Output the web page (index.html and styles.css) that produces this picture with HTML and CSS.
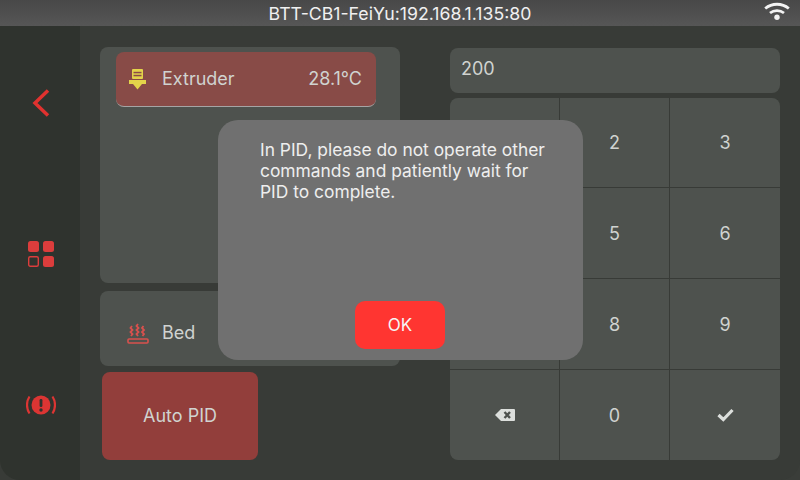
FILE: index.html
```html
<!DOCTYPE html>
<html lang="en">
<head>
  <meta charset="UTF-8">
  <title>PID Tuning</title>
  <link rel="stylesheet" href="styles.css">
</head>
<body>
  <div class="screen">
    <header class="topbar">
      <span class="host">BTT-CB1-FeiYu:192.168.1.135:80</span>
      <svg class="wifi" width="26" height="18" viewBox="0 0 26 18">
        <path d="M1.200 6.500C8 0.800 18 0.800 24.800 6.500" fill="none" stroke="#f2f2f2" stroke-width="2.800"/>
        <path d="M6 11C10 7.800 16 7.800 20 11" fill="none" stroke="#f2f2f2" stroke-width="2.800"/>
        <circle cx="13" cy="15.300" r="2.700" fill="#f2f2f2"/>
      </svg>
    </header>

    <div class="body">
      <nav class="sidebar">
        <svg width="24" height="30" viewBox="0 0 24 30">
          <path d="M19 2.500L6 15L19 27.500" fill="none" stroke="#e0322f" stroke-width="3.500"/>
        </svg>
        <svg width="26" height="26" viewBox="0 0 26 26">
          <rect x="0" y="0" width="11" height="11" rx="2.500" fill="#dc3d3c"/>
          <rect x="15" y="0" width="11" height="11" rx="2.500" fill="#dc3d3c"/>
          <rect x="0.700" y="15.700" width="9.600" height="9.600" rx="1.500" fill="none" stroke="#dc3d3c" stroke-width="1.400"/>
          <rect x="15" y="15" width="11" height="11" rx="2.500" fill="#dc3d3c"/>
        </svg>
        <svg width="30" height="20" viewBox="0 0 30 20">
          <circle cx="15" cy="10" r="9.500" fill="#dc3533"/>
          <rect x="13.600" y="4" width="2.800" height="8" rx="1.200" fill="#2f332e"/>
          <circle cx="15" cy="15" r="1.700" fill="#2f332e"/>
          <path d="M3.500 1.500C0.200 6.500 0.200 13.500 3.500 18.500M26.500 1.500C29.800 6.500 29.800 13.500 26.500 18.500" fill="none" stroke="#dc3533" stroke-width="2.200"/>
        </svg>
      </nav>

      <main class="content">
        <section class="left">
          <div class="panel heaters">
            <div class="heater active">
              <svg class="heater-icon" width="17" height="21" viewBox="0 0 17 21">
                <rect x="3" y="0" width="11" height="10" rx="1" fill="#e3d44a"/>
                <rect x="4.500" y="2.800" width="8" height="1.500" fill="#8a4b48"/>
                <rect x="4.500" y="5.800" width="8" height="1.500" fill="#8a4b48"/>
                <path d="M0 11H17V15H13L8.500 20.500L4 15H0Z" fill="#e3d44a"/>
              </svg>
              <span class="heater-name">Extruder</span>
              <span class="heater-temp">28.1℃</span>
            </div>
          </div>
          <div class="panel bed">
            <svg class="heater-icon" width="22" height="21" viewBox="0 0 22 21">
              <path d="M5 3L3.500 5L5.500 7L3.500 9L5.500 11L4 13M11 1L9.500 3L11.500 5L9.500 7L11.500 9L9.500 11L11 13M16.500 3L15 5L17 7L15 9L17 11L15.500 13" fill="none" stroke="#d9514e" stroke-width="1.800"/>
              <rect x="1" y="16" width="20" height="4" rx="1" fill="none" stroke="#d9514e" stroke-width="1.600"/>
            </svg>
            <span class="heater-name">Bed</span>
          </div>
          <button class="auto-pid">Auto PID</button>
        </section>

        <section class="right">
          <div class="input">200</div>
          <!-- left column digits sit behind the dialog -->
          <div class="keypad">
            <div class="key"></div>
            <div class="key">2</div>
            <div class="key">3</div>
            <div class="key"></div>
            <div class="key">5</div>
            <div class="key">6</div>
            <div class="key"></div>
            <div class="key">8</div>
            <div class="key">9</div>
            <div class="key">
              <svg width="20" height="12" viewBox="0 0 20 12">
                <path d="M6 0H19A1 1 0 0 1 20 1V11A1 1 0 0 1 19 12H6L0 6Z" fill="#dcdfdc"/>
                <path d="M9.500 3L15 9M15 3L9.500 9" stroke="#4e524e" stroke-width="2.400"/>
              </svg>
            </div>
            <div class="key">0</div>
            <div class="key">
              <svg width="17" height="14" viewBox="0 0 17 14">
                <path d="M1.500 7L6.300 11.500L15.500 2" fill="none" stroke="#dcdfdc" stroke-width="3.200"/>
              </svg>
            </div>
          </div>
        </section>
      </main>
    </div>

    <div class="dialog">
      <p class="dialog-text">In PID, please do not operate other commands and patiently wait for PID to complete.</p>
      <button class="dialog-ok">OK</button>
    </div>
  </div>
</body>
</html>
```

FILE: styles.css
```css
* {
  box-sizing: border-box;
}

html, body {
  margin: 0;
  padding: 0;
}

body {
  width: 800px;
  height: 480px;
  overflow: hidden;
  font-family: Inter, "Noto Sans", sans-serif;
  color: #d0d3d0;
}

.screen {
  position: relative;
  width: 800px;
  height: 480px;
  background-color: #3a3d39;
  display: flex;
  flex-direction: column;
}

.topbar {
  position: relative;
  height: 26px;
  flex: none;
  display: flex;
  align-items: center;
  justify-content: center;
  background: linear-gradient(#484848, #565656);
}

.host {
  font-size: 17.7px;
  color: #f0f0f0;
}

.wifi {
  position: absolute;
  right: 10px;
  top: 2px;
}

.body {
  flex: 1;
  display: flex;
  min-height: 0;
  background-color: #383b37;
  border-radius: 0 0 20px 0;
}

.sidebar {
  width: 80px;
  flex: none;
  background-color: #2f332e;
  border-radius: 0 0 0 20px;
  display: grid;
  grid-auto-rows: 151px;
  justify-items: center;
  align-items: center;
  padding: 1px 0 0 1px;
}

.content {
  flex: 1;
  display: flex;
  padding: 21px 20px 20px 20px;
  gap: 50px;
}

.left {
  width: 300px;
  flex: none;
  display: flex;
  flex-direction: column;
}

.panel {
  background-color: #4e524e;
  border-radius: 8px;
}

.heaters {
  height: 236px;
  padding: 5px 24px 5px 16px;
}

.heater {
  display: flex;
  align-items: center;
  height: 55px;
  padding: 0 14px 0 13px;
  border-radius: 8px;
  border-bottom: 1px solid #a5a5a5;
  background-color: #884b47;
  font-size: 18px;
}

.heater-icon {
  flex: none;
}

.heater-name {
  margin-left: 16px;
  padding-bottom: 2px;
}

.heater-temp {
  margin-left: auto;
  padding-bottom: 2px;
}

.bed {
  height: 75px;
  margin-top: 8px;
  display: flex;
  align-items: flex-end;
  padding: 0 0 22px 27px;
  font-size: 18px;
}

.bed .heater-name {
  margin-left: 13px;
  padding-bottom: 1px;
  line-height: 20px;
}

.auto-pid {
  width: 156px;
  height: 88px;
  margin: 6px 0 0 2px;
  padding-bottom: 2px;
  border: none;
  border-radius: 8px;
  background-color: #923e3b;
  color: #d0d3d0;
  font: inherit;
  font-size: 18px;
}

.right {
  flex: 1;
  display: flex;
  flex-direction: column;
}

.input {
  height: 45px;
  margin-top: 1px;
  padding: 0 0 4px 11px;
  display: flex;
  align-items: center;
  border-radius: 8px;
  background-color: #4e524e;
  font-size: 18px;
}

.keypad {
  flex: 1;
  margin-top: 5px;
  display: grid;
  grid-template-columns: 109px 109px 1fr;
  grid-template-rows: 89px 90px 90px 1fr;
  gap: 1px;
  border-radius: 8px;
  overflow: hidden;
  background-color: #383b37;
}

.key {
  display: flex;
  align-items: center;
  justify-content: center;
  background-color: #4e524e;
  font-size: 18px;
}

.dialog {
  position: absolute;
  left: 218px;
  top: 120px;
  width: 365px;
  height: 240px;
  padding: 19px 38px 20px 42px;
  border-radius: 20px;
  background-color: #707070;
}

.dialog-text {
  margin: 0;
  font-size: 17.4px;
  line-height: 21px;
  color: #eeeeee;
}

.dialog-ok {
  position: absolute;
  left: 137px;
  top: 181px;
  width: 90px;
  height: 48px;
  border: none;
  border-radius: 10px;
  background-color: #ff3531;
  color: #f5f5f5;
  font: inherit;
  font-size: 17px;
}
```
